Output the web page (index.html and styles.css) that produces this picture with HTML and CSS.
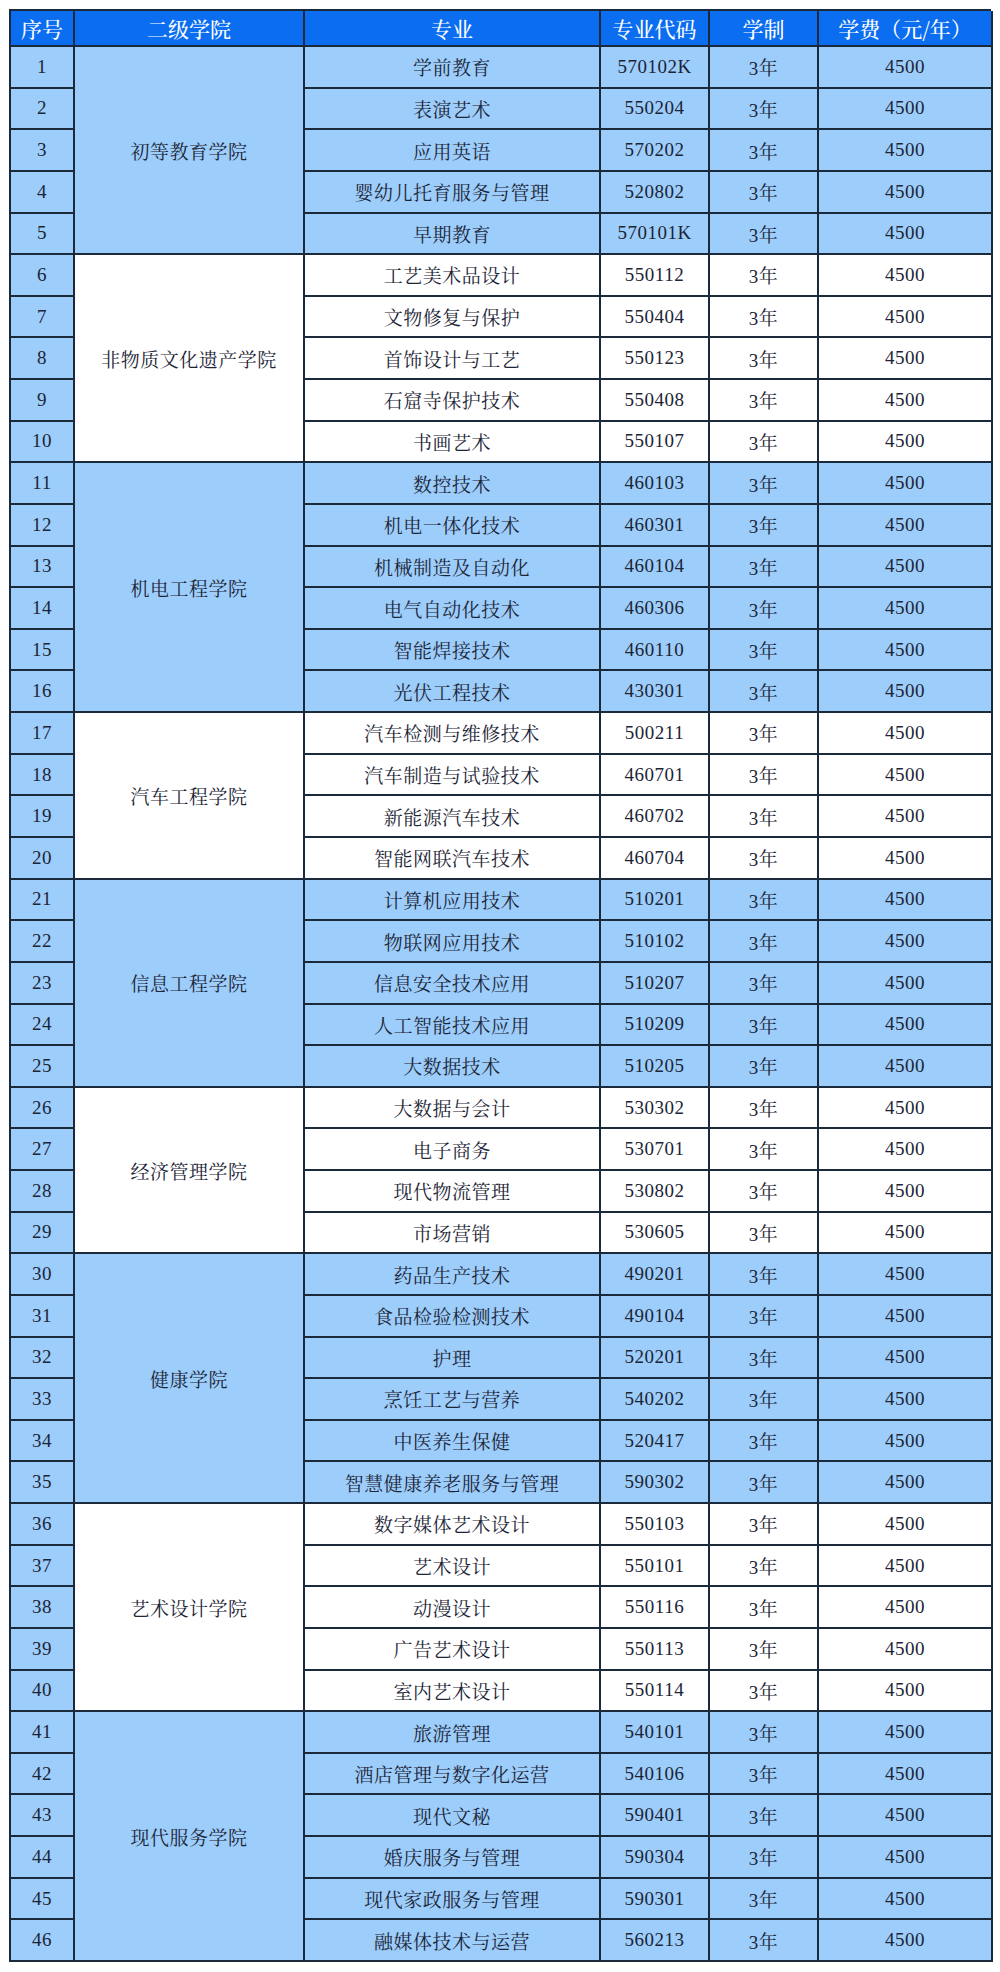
FILE: index.html
```html
<!DOCTYPE html>
<html lang="zh-CN">
<head>
<meta charset="utf-8">
<title>专业列表</title>
<link rel="stylesheet" href="styles.css">
</head>
<body>
<div class="table">
  <div class="th">序号</div><div class="th">二级学院</div><div class="th">专业</div><div class="th">专业代码</div><div class="th">学制</div><div class="th">学费（元/年）</div>

  <div class="c num">1</div><div class="c col blue span5">初等教育学院</div><div class="c blue">学前教育</div><div class="c blue">570102K</div><div class="c blue">3年</div><div class="c blue">4500</div>
  <div class="c num">2</div><div class="c blue">表演艺术</div><div class="c blue">550204</div><div class="c blue">3年</div><div class="c blue">4500</div>
  <div class="c num">3</div><div class="c blue">应用英语</div><div class="c blue">570202</div><div class="c blue">3年</div><div class="c blue">4500</div>
  <div class="c num">4</div><div class="c blue">婴幼儿托育服务与管理</div><div class="c blue">520802</div><div class="c blue">3年</div><div class="c blue">4500</div>
  <div class="c num">5</div><div class="c blue">早期教育</div><div class="c blue">570101K</div><div class="c blue">3年</div><div class="c blue">4500</div>

  <div class="c num">6</div><div class="c col span5">非物质文化遗产学院</div><div class="c">工艺美术品设计</div><div class="c">550112</div><div class="c">3年</div><div class="c">4500</div>
  <div class="c num">7</div><div class="c">文物修复与保护</div><div class="c">550404</div><div class="c">3年</div><div class="c">4500</div>
  <div class="c num">8</div><div class="c">首饰设计与工艺</div><div class="c">550123</div><div class="c">3年</div><div class="c">4500</div>
  <div class="c num">9</div><div class="c">石窟寺保护技术</div><div class="c">550408</div><div class="c">3年</div><div class="c">4500</div>
  <div class="c num">10</div><div class="c">书画艺术</div><div class="c">550107</div><div class="c">3年</div><div class="c">4500</div>

  <div class="c num">11</div><div class="c col blue span6">机电工程学院</div><div class="c blue">数控技术</div><div class="c blue">460103</div><div class="c blue">3年</div><div class="c blue">4500</div>
  <div class="c num">12</div><div class="c blue">机电一体化技术</div><div class="c blue">460301</div><div class="c blue">3年</div><div class="c blue">4500</div>
  <div class="c num">13</div><div class="c blue">机械制造及自动化</div><div class="c blue">460104</div><div class="c blue">3年</div><div class="c blue">4500</div>
  <div class="c num">14</div><div class="c blue">电气自动化技术</div><div class="c blue">460306</div><div class="c blue">3年</div><div class="c blue">4500</div>
  <div class="c num">15</div><div class="c blue">智能焊接技术</div><div class="c blue">460110</div><div class="c blue">3年</div><div class="c blue">4500</div>
  <div class="c num">16</div><div class="c blue">光伏工程技术</div><div class="c blue">430301</div><div class="c blue">3年</div><div class="c blue">4500</div>

  <div class="c num">17</div><div class="c col span4">汽车工程学院</div><div class="c">汽车检测与维修技术</div><div class="c">500211</div><div class="c">3年</div><div class="c">4500</div>
  <div class="c num">18</div><div class="c">汽车制造与试验技术</div><div class="c">460701</div><div class="c">3年</div><div class="c">4500</div>
  <div class="c num">19</div><div class="c">新能源汽车技术</div><div class="c">460702</div><div class="c">3年</div><div class="c">4500</div>
  <div class="c num">20</div><div class="c">智能网联汽车技术</div><div class="c">460704</div><div class="c">3年</div><div class="c">4500</div>

  <div class="c num">21</div><div class="c col blue span5">信息工程学院</div><div class="c blue">计算机应用技术</div><div class="c blue">510201</div><div class="c blue">3年</div><div class="c blue">4500</div>
  <div class="c num">22</div><div class="c blue">物联网应用技术</div><div class="c blue">510102</div><div class="c blue">3年</div><div class="c blue">4500</div>
  <div class="c num">23</div><div class="c blue">信息安全技术应用</div><div class="c blue">510207</div><div class="c blue">3年</div><div class="c blue">4500</div>
  <div class="c num">24</div><div class="c blue">人工智能技术应用</div><div class="c blue">510209</div><div class="c blue">3年</div><div class="c blue">4500</div>
  <div class="c num">25</div><div class="c blue">大数据技术</div><div class="c blue">510205</div><div class="c blue">3年</div><div class="c blue">4500</div>

  <div class="c num">26</div><div class="c col span4">经济管理学院</div><div class="c">大数据与会计</div><div class="c">530302</div><div class="c">3年</div><div class="c">4500</div>
  <div class="c num">27</div><div class="c">电子商务</div><div class="c">530701</div><div class="c">3年</div><div class="c">4500</div>
  <div class="c num">28</div><div class="c">现代物流管理</div><div class="c">530802</div><div class="c">3年</div><div class="c">4500</div>
  <div class="c num">29</div><div class="c">市场营销</div><div class="c">530605</div><div class="c">3年</div><div class="c">4500</div>

  <div class="c num">30</div><div class="c col blue span6">健康学院</div><div class="c blue">药品生产技术</div><div class="c blue">490201</div><div class="c blue">3年</div><div class="c blue">4500</div>
  <div class="c num">31</div><div class="c blue">食品检验检测技术</div><div class="c blue">490104</div><div class="c blue">3年</div><div class="c blue">4500</div>
  <div class="c num">32</div><div class="c blue">护理</div><div class="c blue">520201</div><div class="c blue">3年</div><div class="c blue">4500</div>
  <div class="c num">33</div><div class="c blue">烹饪工艺与营养</div><div class="c blue">540202</div><div class="c blue">3年</div><div class="c blue">4500</div>
  <div class="c num">34</div><div class="c blue">中医养生保健</div><div class="c blue">520417</div><div class="c blue">3年</div><div class="c blue">4500</div>
  <div class="c num">35</div><div class="c blue">智慧健康养老服务与管理</div><div class="c blue">590302</div><div class="c blue">3年</div><div class="c blue">4500</div>

  <div class="c num">36</div><div class="c col span5">艺术设计学院</div><div class="c">数字媒体艺术设计</div><div class="c">550103</div><div class="c">3年</div><div class="c">4500</div>
  <div class="c num">37</div><div class="c">艺术设计</div><div class="c">550101</div><div class="c">3年</div><div class="c">4500</div>
  <div class="c num">38</div><div class="c">动漫设计</div><div class="c">550116</div><div class="c">3年</div><div class="c">4500</div>
  <div class="c num">39</div><div class="c">广告艺术设计</div><div class="c">550113</div><div class="c">3年</div><div class="c">4500</div>
  <div class="c num">40</div><div class="c">室内艺术设计</div><div class="c">550114</div><div class="c">3年</div><div class="c">4500</div>

  <div class="c num">41</div><div class="c col blue span6">现代服务学院</div><div class="c blue">旅游管理</div><div class="c blue">540101</div><div class="c blue">3年</div><div class="c blue">4500</div>
  <div class="c num">42</div><div class="c blue">酒店管理与数字化运营</div><div class="c blue">540106</div><div class="c blue">3年</div><div class="c blue">4500</div>
  <div class="c num">43</div><div class="c blue">现代文秘</div><div class="c blue">590401</div><div class="c blue">3年</div><div class="c blue">4500</div>
  <div class="c num">44</div><div class="c blue">婚庆服务与管理</div><div class="c blue">590304</div><div class="c blue">3年</div><div class="c blue">4500</div>
  <div class="c num">45</div><div class="c blue">现代家政服务与管理</div><div class="c blue">590301</div><div class="c blue">3年</div><div class="c blue">4500</div>
  <div class="c num">46</div><div class="c blue">融媒体技术与运营</div><div class="c blue">560213</div><div class="c blue">3年</div><div class="c blue">4500</div>
</div>
</body>
</html>
```

FILE: styles.css
```css
html, body {
  margin: 0;
  padding: 0;
  background: #ffffff;
}

body {
  padding: 9px 10px 0 9px;
  font-family: "Liberation Serif", "Noto Serif CJK SC", "Noto Sans CJK SC", serif;
}

.table {
  box-sizing: border-box;
  width: 982px;
  height: 1953px;
  display: grid;
  grid-template-columns: 64px 230px 296px 109px 109px 174px;
  grid-template-rows: 36px repeat(46, 1fr);
  border-left: 2px solid #1b2a3b;
  border-top: 2px solid #1b2a3b;
}

.th,
.c {
  box-sizing: border-box;
  border-right: 2px solid #1b2a3b;
  border-bottom: 2px solid #1b2a3b;
  display: flex;
  align-items: center;
  justify-content: center;
  text-align: center;
  white-space: nowrap;
}

.th {
  background: #0b6df0;
  color: #ffffff;
  font-size: 21px;
  font-weight: 500;
  font-family: "Noto Serif CJK SC", "Noto Sans CJK SC", sans-serif;
  padding-bottom: 1px;
}

.c {
  background: #ffffff;
  color: #1c2536;
  font-size: 19px;
  letter-spacing: 0.5px;
}

.num,
.blue {
  background: #9dcdfb;
}

.span4 { grid-row: span 4; }
.span5 { grid-row: span 5; }
.span6 { grid-row: span 6; }
```
